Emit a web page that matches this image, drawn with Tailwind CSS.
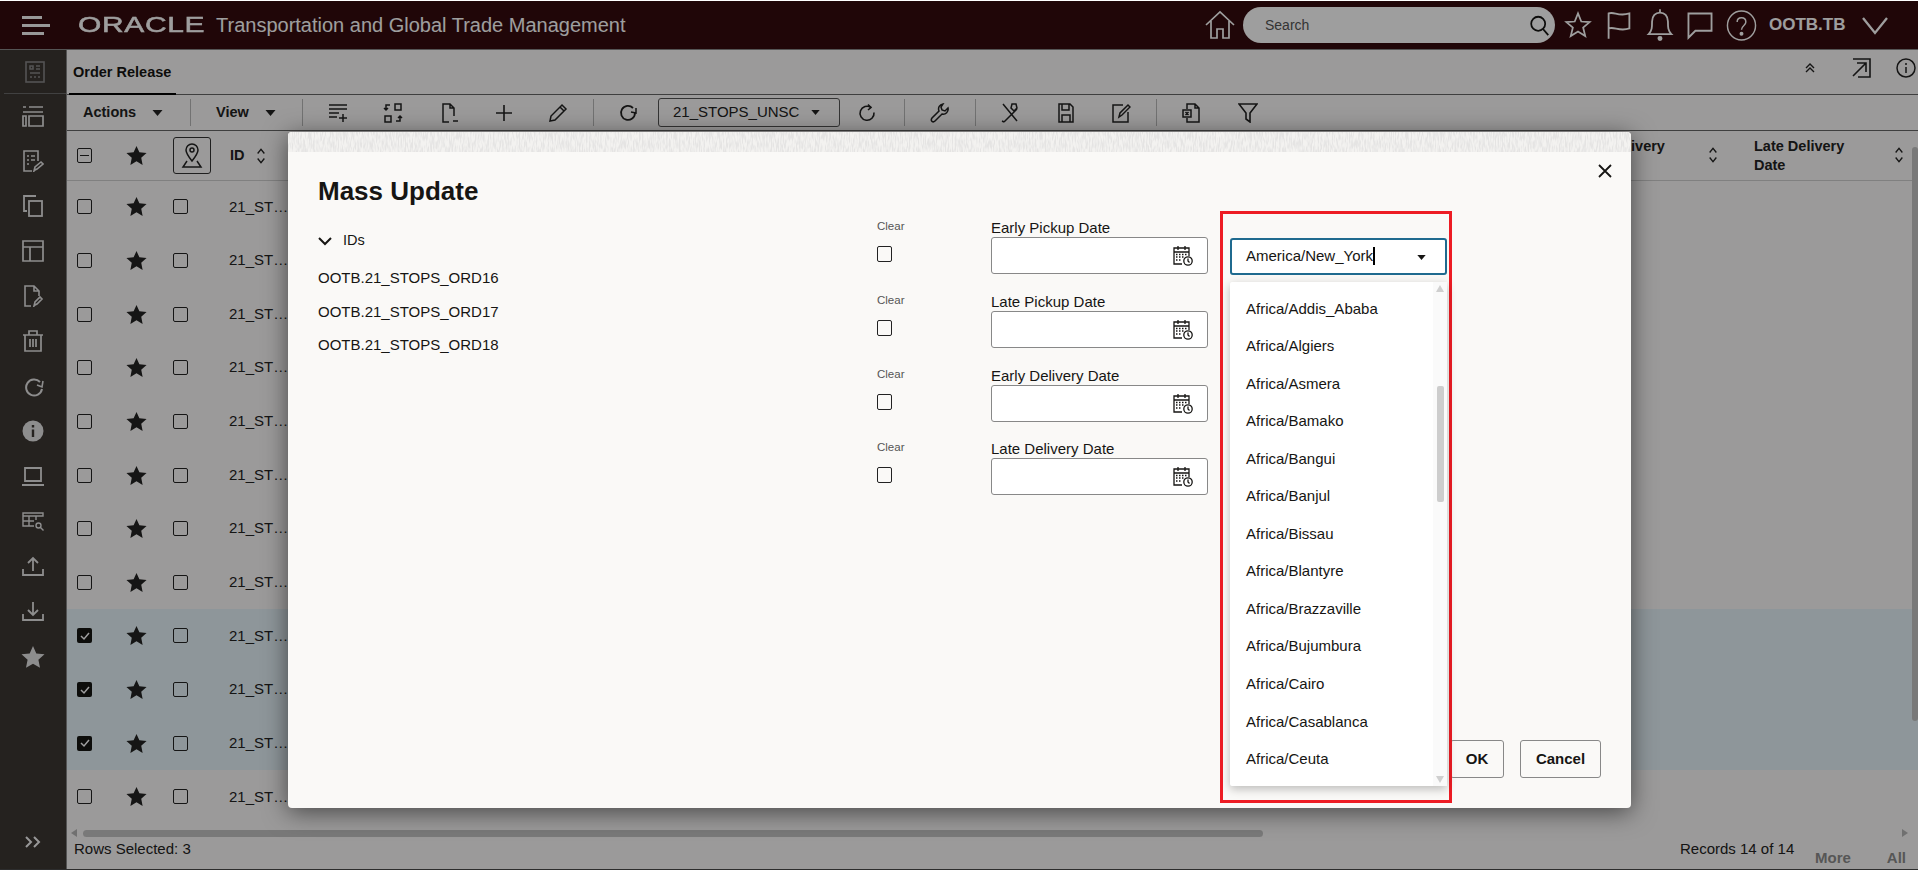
<!DOCTYPE html>
<html><head><meta charset="utf-8"><script src="https://cdn.jsdelivr.net/npm/@tailwindcss/browser@4"></script></head>
<body class="font-['Liberation_Sans',Arial,sans-serif] bg-white text-[#161513]">
<svg width="0" height="0" class="absolute">
<defs>
<symbol id="star" viewBox="0 0 24 24"><polygon fill="currentColor" points="12,1 15.300,8.400 23.500,9.200 17.400,14.700 19,22.800 12,18.700 5,22.800 6.600,14.700 0.500,9.200 8.700,8.400"/></symbol>
<symbol id="sort" viewBox="0 0 12 24" fill="none" stroke="currentColor" stroke-width="1.6"><path d="M2 9l4-5 4 5M2 15l4 5 4-5"/></symbol>
<symbol id="cal" viewBox="3 2 20 21" fill="none" stroke="currentColor" stroke-width="1.3"><path d="M12 21H4V5h15v8M8 3v4M15 3v4M4 9h15"/><path d="M6 11.500h1.500M9 11.500h1.500M12 11.500h1.500M15 11.500h1.500M6 14h1.500M9 14h1.500M12 14h1.500M6 17h1.500M9 17h1.500" stroke-width="1.500"/><circle cx="18" cy="18" r="4.200"/><path d="M18 15.500V18l1.500 1.500"/></symbol>
<symbol id="caret" viewBox="0 0 10 6"><path fill="currentColor" d="M0 0h10L5 6z"/></symbol>
</defs>
</svg>
<div class="relative w-[1918px] h-[871px] overflow-hidden pt-px">
<!-- app shell -->
<header class="h-[48px] bg-[#340a0d] text-white flex items-center">
  <div class="ml-[22px] w-[28px] flex flex-col gap-[5px]"><span class="block h-[3px] w-[20px] bg-[#f5f5f5]"></span><span class="block h-[3px] w-[28px] bg-[#f5f5f5]"></span><span class="block h-[3px] w-[22px] bg-[#f5f5f5]"></span></div>
  <div class="ml-[28px] w-[125px] relative text-[22px] leading-none tracking-[0.5px] origin-left scale-x-[1.36] whitespace-nowrap [-webkit-text-stroke:0.5px_currentColor]">ORACLE</div>
  <div class="ml-[13px] text-[20px] whitespace-nowrap">Transportation and Global Trade Management</div>
  <div class="ml-auto flex items-center">
    <svg class="w-[32px] h-[32px] mr-[7px]" viewBox="0 0 32 32" fill="none" stroke="currentColor" stroke-width="1.7"><path d="M2 16L16 3l14 13M7 12v17h6v-9h6v9h6V12"/></svg>
    <div class="w-[312px] h-[36px] rounded-full bg-white flex items-center pl-[22px] pr-[5px] justify-between text-[#555] text-[14px]"><span>Search</span><svg class="w-[21px] h-[21px] text-[#161513]" viewBox="0 0 24 24" fill="none" stroke="currentColor" stroke-width="2"><circle cx="10.500" cy="10" r="8"/><path d="M16 16l6 7"/></svg></div>
    <svg class="ml-[9px] w-[28px] h-[28px]" viewBox="0 0 24 24" fill="none" stroke="currentColor" stroke-width="1.5"><polygon points="12,2 14.800,9 22,9.500 16.400,14.200 18.200,21.500 12,17.500 5.800,21.500 7.600,14.200 2,9.500 9.200,9"/></svg>
    <svg class="ml-[13px] w-[28px] h-[30px]" viewBox="0 0 24 26" fill="none" stroke="currentColor" stroke-width="1.6"><path d="M3 25V3c5-2 8 3 18 0v13c-9 3-13-2-18 0"/></svg>
    <svg class="ml-[13px] w-[28px] h-[34px]" viewBox="0 0 24 30" fill="none" stroke="currentColor" stroke-width="1.6"><path d="M2 23c3-3 3-6 3-11 0-5 3-8 7-8s7 3 7 8c0 5 0 8 3 11z"/><path d="M12 1v3"/><circle cx="12" cy="27" r="1.400" fill="currentColor"/></svg>
    <svg class="ml-[12px] w-[28px] h-[30px]" viewBox="0 0 24 26" fill="none" stroke="currentColor" stroke-width="1.6"><path d="M2 3h20v15H8l-6 6z"/></svg>
    <svg class="ml-[12px] w-[31px] h-[31px]" viewBox="0 0 32 32" fill="none" stroke="currentColor" stroke-width="1.5"><ellipse cx="16" cy="16" rx="14.500" ry="15"/><path d="M11.500 12.500c0-6 9-6 9 0 0 3.500-4.500 3.500-4.500 8"/><circle cx="16" cy="24.500" r="1.300" fill="currentColor"/></svg>
    <span class="ml-[12px] text-[17px] font-bold w-[84px]">OOTB.TB</span>
    <svg class="ml-[9px] mr-[30px] w-[26px] h-[20px]" viewBox="0 0 26 20" fill="none" stroke="currentColor" stroke-width="2.300"><path d="M1 3l12 15L25 3"/></svg>
  </div>
</header>
<div class="flex h-[821px] border-b border-[#4a4a4a]">
  <aside class="w-[66px] shrink-0 bg-[#3d3733] text-[#e4e4e4] flex flex-col items-center border-t border-[#888]">
    <div class="w-[62px] ml-[4px] h-[44px] flex items-center justify-center border-b border-[#6a6a6a] text-[#888]"><svg class="w-[20px] h-[22px]" viewBox="0 0 20 22" fill="none" stroke="currentColor" stroke-width="1.6"><rect x="1" y="1" width="18" height="20"/><path d="M5 5h3v3H5zM11 5h4M11 8h4M5 12h10M5 16h2M9 16h2M13 16h2"/></svg></div>
    <div class="flex flex-col items-center gap-[23px] pt-[11px]">
      <svg class="w-[22px] h-[22px]" viewBox="0 0 22 22" fill="none" stroke="currentColor" stroke-width="1.7"><path d="M1 2h3M7 2h14M1 7h20M1 11h3v10H1zM7 11h14v10H7z"/></svg>
      <svg class="w-[22px] h-[22px]" viewBox="0 0 22 22" fill="none" stroke="currentColor" stroke-width="1.6"><path d="M10 21H2V1h14v10M5 6h2M9 6h4M5 10h2M9 10h4M5 14h2M13 20l-1 1 1-4 6-5 2 2-6 5z"/></svg>
      <svg class="w-[22px] h-[22px]" viewBox="0 0 22 22" fill="none" stroke="currentColor" stroke-width="1.8"><path d="M14 1H2v15h3"/><rect x="7" y="6" width="13" height="15"/></svg>
      <svg class="w-[22px] h-[22px]" viewBox="0 0 22 22" fill="none" stroke="currentColor" stroke-width="1.7"><path d="M1 1h20v20H1zM1 7h20M8 7v14"/></svg>
      <svg class="w-[22px] h-[22px]" viewBox="0 0 22 22" fill="none" stroke="currentColor" stroke-width="1.6"><path d="M9 21H3V1h9l5 5v5M12 1v5h5M13 20l-1 1 1-4 5-5 2 2-5 5z"/></svg>
      <svg class="w-[22px] h-[22px]" viewBox="0 0 22 22" fill="none" stroke="currentColor" stroke-width="1.7"><path d="M1 5h20M7 5V1h8v4M3 5v16h16V5M8 9v8M11 9v8M14 9v8"/></svg>
      <svg class="w-[22px] h-[22px]" viewBox="0 0 22 22" fill="none" stroke="currentColor" stroke-width="2"><path d="M18 7a8 8 0 1 0 2 7"/><path d="M15 10l5 2 1-6" stroke-width="1.6"/></svg>
      <svg class="w-[22px] h-[22px]" viewBox="0 0 22 22"><circle cx="11" cy="11" r="10.500" fill="currentColor"/><path fill="#3d3733" d="M9.800 9.500h2.400V17H9.800zM9.800 5h2.400v2.400H9.800z"/></svg>
      <svg class="w-[22px] h-[22px]" viewBox="0 0 22 22" fill="none" stroke="currentColor" stroke-width="1.8"><path d="M3 3h16v13H3zM0 20h22"/></svg>
      <svg class="w-[22px] h-[22px]" viewBox="0 0 22 22" fill="none" stroke="currentColor" stroke-width="1.4"><path d="M1 3h20v3H1zM1 6v10h11M1 11h11M7 6v10M14 6v4"/><circle cx="16.500" cy="15.500" r="2.500"/><path d="M18.500 17.500l3 3"/></svg>
      <svg class="w-[22px] h-[22px]" viewBox="0 0 22 22" fill="none" stroke="currentColor" stroke-width="1.8"><path d="M1 14v6h20v-6M11 16V3M6 8l5-5 5 5"/></svg>
      <svg class="w-[22px] h-[22px]" viewBox="0 0 22 22" fill="none" stroke="currentColor" stroke-width="1.8"><path d="M1 14v6h20v-6M11 2v13M6 10l5 5 5-5"/></svg>
      <svg class="w-[24px] h-[24px]"><use href="#star"/></svg>
    </div>
    <div class="mt-auto mb-[21px] text-[#f5f5f5]"><svg class="w-[18px] h-[12px] block" viewBox="0 0 18 12" fill="none" stroke="currentColor" stroke-width="2"><path d="M2 1l5 5-5 5M10 1l5 5-5 5"/></svg></div>
  </aside>
  <main class="flex-1 min-w-0 bg-[#fbf9f8] flex flex-col relative border-l border-[#888] border-t">
    <!-- tabs -->
    <div class="h-[45px] border-b border-[#666] flex items-stretch shrink-0">
      <div class="ml-[2px] px-[4px] w-[107px] flex items-center border-b-[2px] border-black -mb-px font-bold text-[14.500px] whitespace-nowrap pt-[2px]">Order Release</div>
      <div class="ml-auto flex items-center pb-[9px] text-[#222]">
        <svg class="w-[10px] h-[10px] mr-[37px]" viewBox="0 0 10 10" fill="none" stroke="currentColor" stroke-width="1.400"><path d="M1 5l4-4 4 4M1 9l4-4 4 4"/></svg>
        <svg class="w-[20px] h-[20px] mr-[24px]" viewBox="0 0 20 20" fill="none" stroke="currentColor" stroke-width="1.600"><path d="M1 1h17v18H6M5 5h9v9M14 5L1 18"/></svg>
        <svg class="w-[20px] h-[20px] -mr-[7px]" viewBox="0 0 20 20" fill="none" stroke="currentColor" stroke-width="1.500"><circle cx="10" cy="10" r="9"/><path d="M10 9v6M10 5v2"/></svg>
        <span class="w-[9px]"></span>
      </div>
    </div>
    <!-- toolbar -->
    <div class="h-[36px] border-b border-[#666] flex items-center shrink-0 text-[#222] text-[14.500px]">
      <span class="ml-[16px] w-[55px] font-bold">Actions</span>
      <svg class="ml-[14px] w-[11px] h-[6px]"><use href="#caret"/></svg>
      <span class="ml-[27px] w-px h-[27px] bg-[#b8b8b8]"></span>
      <span class="ml-[25px] w-[34px] font-bold">View</span>
      <svg class="ml-[15px] w-[11px] h-[6px]"><use href="#caret"/></svg>
      <span class="ml-[26px] w-px h-[27px] bg-[#b8b8b8]"></span>
      <svg class="ml-[25px] w-[20px] h-[20px]" viewBox="0 0 20 20" fill="none" stroke="currentColor" stroke-width="1.500"><path d="M1 2h18M1 6h18M1 10h10M1 14h8M15 11v8M11 15h8"/></svg>
      <svg class="ml-[35px] w-[20px] h-[20px]" viewBox="0 0 20 20" fill="none" stroke="currentColor" stroke-width="1.500"><path d="M12 1h6v6h-6zM2 13h6v6H2zM7 2H3v4M1 5l2 2 2-2M13 18h4v-5M15 15l2-2 2 2" /></svg>
      <svg class="ml-[36px] w-[20px] h-[20px]" viewBox="0 0 20 20" fill="none" stroke="currentColor" stroke-width="1.500"><path d="M10 19H4V1h7l4 4v8M11 1v4h4M14 18h5"/></svg>
      <svg class="ml-[35px] w-[20px] h-[20px]" viewBox="0 0 20 20" fill="none" stroke="currentColor" stroke-width="1.600"><path d="M10 2v16M2 10h16"/></svg>
      <svg class="ml-[34px] w-[20px] h-[20px]" viewBox="0 0 20 20" fill="none" stroke="currentColor" stroke-width="1.500"><path d="M2 18l1-5L14 2l4 4L7 17zM12 4l4 4"/></svg>
      <span class="ml-[25px] w-px h-[27px] bg-[#b8b8b8]"></span>
      <svg class="ml-[24px] w-[20px] h-[20px]" viewBox="0 0 20 20" fill="none" stroke="currentColor" stroke-width="1.800"><path d="M15 5a7 7 0 1 0 2 5"/><path d="M13 9l5 1 0-5" stroke-width="1.500"/></svg>
      <div class="ml-[20px] w-[182px] h-[29px] border border-[#555] rounded-[3px] flex items-center pl-[14px] whitespace-nowrap text-[15px]"><span class="w-[127px] overflow-hidden">21_STOPS_UNSC</span><svg class="ml-[11px] w-[9px] h-[5px]"><use href="#caret"/></svg></div>
      <svg class="ml-[18px] w-[20px] h-[20px]" viewBox="0 0 20 20" fill="none" stroke="currentColor" stroke-width="1.600"><path d="M13 4.500a7 7 0 1 0 3 5"/><path d="M10 1.500l3 3-3 2.500"/></svg>
      <span class="ml-[26px] w-px h-[27px] bg-[#b8b8b8]"></span>
      <svg class="ml-[25px] w-[20px] h-[20px]" viewBox="0 0 20 20" fill="none" stroke="currentColor" stroke-width="1.500"><path d="M13 1a5 5 0 0 0-4 7L2 15c-2 3 1 5 3 3l7-7a5 5 0 0 0 6-6l-3 3-3-1-1-3z"/></svg>
      <span class="ml-[25px] w-px h-[27px] bg-[#b8b8b8]"></span>
      <svg class="ml-[24px] w-[20px] h-[20px]" viewBox="0 0 20 20" fill="none" stroke="currentColor" stroke-width="1.500"><path d="M3 1l14 17M17 6l-13 13M2 18l2 1M12 1h4l1 4-3 3-3-3z"/></svg>
      <svg class="ml-[36px] w-[20px] h-[20px]" viewBox="0 0 20 20" fill="none" stroke="currentColor" stroke-width="1.500"><path d="M3 1h11l3 3v15H3zM6 1v6h7V1M6 19v-7h8v7"/></svg>
      <svg class="ml-[35px] w-[20px] h-[20px]" viewBox="0 0 20 20" fill="none" stroke="currentColor" stroke-width="1.500"><path d="M17 9v10H2V2h10M8 14l1-4 8-8 2 2-8 8z"/></svg>
      <span class="ml-[25px] w-px h-[27px] bg-[#b8b8b8]"></span>
      <svg class="ml-[25px] w-[20px] h-[20px]" viewBox="0 0 20 20" fill="none" stroke="currentColor" stroke-width="1.500"><path d="M5 6V1h8l4 4v14H5v-4M13 1v4h4M1 7h8v7H1zM3.500 9l3 3M6.500 9l-3 3"/></svg>
      <svg class="ml-[36px] w-[20px] h-[20px]" viewBox="0 0 20 20" fill="none" stroke="currentColor" stroke-width="1.600"><path d="M1 1h18l-7 9v9l-4-3v-6z"/></svg>
    </div>
    <!-- table header -->
    <div class="h-[50px] border-b border-[#cfcfcf] flex items-center pl-[10px] shrink-0 text-[14.500px] font-bold text-[#222] relative">
      <span class="w-[15px] h-[15px] border-[1.500px] border-[#222] rounded-[2px] flex items-center justify-center"><span class="w-[9px] h-[1.500px] bg-[#222]"></span></span>
      <svg class="ml-[34px] w-[21px] h-[21px]"><use href="#star"/></svg>
      <span class="ml-[26px] w-[38px] h-[37px] border border-[#333] rounded-[3px] flex items-center justify-center"><svg class="w-[22px] h-[26px]" viewBox="0 0 22 26" fill="none" stroke="currentColor" stroke-width="1.500"><path d="M11 18C7 13 5 10 5 7a6 6 0 0 1 12 0c0 3-2 6-6 11z"/><circle cx="11" cy="7" r="2"/><path d="M6 18l-4 6h18l-4-6"/></svg></span>
      <span class="ml-[19px]">ID</span>
      <svg class="ml-[11px] w-[10px] h-[20px]"><use href="#sort"/></svg>
      <div class="absolute left-[1502px] top-[6px] w-[102px] leading-[19px]">Early Delivery Date</div>
      <svg class="absolute left-[1641px] top-[14px] w-[10px] h-[20px]"><use href="#sort"/></svg>
      <div class="absolute left-[1687px] top-[6px] w-[110px] leading-[19px]">Late Delivery Date</div>
      <svg class="absolute left-[1827px] top-[14px] w-[10px] h-[20px]"><use href="#sort"/></svg>
    </div>
    <!-- rows -->
    <div class="-mt-px text-[15px] shrink-0 text-[#222] relative h-[645px]">
      <div class="h-[53.650px] flex items-center pl-[10px]"><span class="w-[15px] h-[15px] border-[1.500px] border-[#222] rounded-[2px]"></span><svg class="ml-[34px] w-[21px] h-[21px]"><use href="#star"/></svg><span class="ml-[26px] w-[15px] h-[15px] border-[1.500px] border-[#222] rounded-[2px]"></span><span class="ml-[41px]">21_ST…</span></div>
      <div class="h-[53.650px] flex items-center pl-[10px]"><span class="w-[15px] h-[15px] border-[1.500px] border-[#222] rounded-[2px]"></span><svg class="ml-[34px] w-[21px] h-[21px]"><use href="#star"/></svg><span class="ml-[26px] w-[15px] h-[15px] border-[1.500px] border-[#222] rounded-[2px]"></span><span class="ml-[41px]">21_ST…</span></div>
      <div class="h-[53.650px] flex items-center pl-[10px]"><span class="w-[15px] h-[15px] border-[1.500px] border-[#222] rounded-[2px]"></span><svg class="ml-[34px] w-[21px] h-[21px]"><use href="#star"/></svg><span class="ml-[26px] w-[15px] h-[15px] border-[1.500px] border-[#222] rounded-[2px]"></span><span class="ml-[41px]">21_ST…</span></div>
      <div class="h-[53.650px] flex items-center pl-[10px]"><span class="w-[15px] h-[15px] border-[1.500px] border-[#222] rounded-[2px]"></span><svg class="ml-[34px] w-[21px] h-[21px]"><use href="#star"/></svg><span class="ml-[26px] w-[15px] h-[15px] border-[1.500px] border-[#222] rounded-[2px]"></span><span class="ml-[41px]">21_ST…</span></div>
      <div class="h-[53.650px] flex items-center pl-[10px]"><span class="w-[15px] h-[15px] border-[1.500px] border-[#222] rounded-[2px]"></span><svg class="ml-[34px] w-[21px] h-[21px]"><use href="#star"/></svg><span class="ml-[26px] w-[15px] h-[15px] border-[1.500px] border-[#222] rounded-[2px]"></span><span class="ml-[41px]">21_ST…</span></div>
      <div class="h-[53.650px] flex items-center pl-[10px]"><span class="w-[15px] h-[15px] border-[1.500px] border-[#222] rounded-[2px]"></span><svg class="ml-[34px] w-[21px] h-[21px]"><use href="#star"/></svg><span class="ml-[26px] w-[15px] h-[15px] border-[1.500px] border-[#222] rounded-[2px]"></span><span class="ml-[41px]">21_ST…</span></div>
      <div class="h-[53.650px] flex items-center pl-[10px]"><span class="w-[15px] h-[15px] border-[1.500px] border-[#222] rounded-[2px]"></span><svg class="ml-[34px] w-[21px] h-[21px]"><use href="#star"/></svg><span class="ml-[26px] w-[15px] h-[15px] border-[1.500px] border-[#222] rounded-[2px]"></span><span class="ml-[41px]">21_ST…</span></div>
      <div class="h-[53.650px] flex items-center pl-[10px]"><span class="w-[15px] h-[15px] border-[1.500px] border-[#222] rounded-[2px]"></span><svg class="ml-[34px] w-[21px] h-[21px]"><use href="#star"/></svg><span class="ml-[26px] w-[15px] h-[15px] border-[1.500px] border-[#222] rounded-[2px]"></span><span class="ml-[41px]">21_ST…</span></div>
      <div class="h-[53.650px] flex items-center pl-[10px] bg-[#e6f3f8]"><span class="w-[15px] h-[15px] bg-[#161513] rounded-[2px] flex items-center justify-center text-white"><svg class="w-[10px] h-[10px]" viewBox="0 0 10 10" fill="none" stroke="currentColor" stroke-width="1.500"><path d="M1 5l3 3 5-6"/></svg></span><svg class="ml-[34px] w-[21px] h-[21px]"><use href="#star"/></svg><span class="ml-[26px] w-[15px] h-[15px] border-[1.500px] border-[#222] rounded-[2px]"></span><span class="ml-[41px]">21_ST…</span></div>
      <div class="h-[53.650px] flex items-center pl-[10px] bg-[#e6f3f8]"><span class="w-[15px] h-[15px] bg-[#161513] rounded-[2px] flex items-center justify-center text-white"><svg class="w-[10px] h-[10px]" viewBox="0 0 10 10" fill="none" stroke="currentColor" stroke-width="1.500"><path d="M1 5l3 3 5-6"/></svg></span><svg class="ml-[34px] w-[21px] h-[21px]"><use href="#star"/></svg><span class="ml-[26px] w-[15px] h-[15px] border-[1.500px] border-[#222] rounded-[2px]"></span><span class="ml-[41px]">21_ST…</span></div>
      <div class="h-[53.650px] flex items-center pl-[10px] bg-[#e6f3f8]"><span class="w-[15px] h-[15px] bg-[#161513] rounded-[2px] flex items-center justify-center text-white"><svg class="w-[10px] h-[10px]" viewBox="0 0 10 10" fill="none" stroke="currentColor" stroke-width="1.500"><path d="M1 5l3 3 5-6"/></svg></span><svg class="ml-[34px] w-[21px] h-[21px]"><use href="#star"/></svg><span class="ml-[26px] w-[15px] h-[15px] border-[1.500px] border-[#222] rounded-[2px]"></span><span class="ml-[41px]">21_ST…</span></div>
      <div class="h-[53.650px] flex items-center pl-[10px]"><span class="w-[15px] h-[15px] border-[1.500px] border-[#222] rounded-[2px]"></span><svg class="ml-[34px] w-[21px] h-[21px]"><use href="#star"/></svg><span class="ml-[26px] w-[15px] h-[15px] border-[1.500px] border-[#222] rounded-[2px]"></span><span class="ml-[41px]">21_ST…</span></div>
    </div>
    <!-- horizontal scrollbar -->
    <div class="h-[16px] shrink-0 flex items-center pl-[4px] text-[#b5b5b5]">
      <svg class="w-[6px] h-[8px]" viewBox="0 0 6 8"><path fill="currentColor" d="M6 0v8L0 4z"/></svg>
      <span class="ml-[6px] w-[1180px] h-[7px] rounded-full bg-[#c4c4c4]"></span>
      <svg class="ml-auto mr-[10px] w-[6px] h-[8px]" viewBox="0 0 6 8"><path fill="currentColor" d="M0 0v8l6-4z"/></svg>
    </div>
    <!-- footer -->
    <div class="flex-1 flex items-start text-[15px] text-[#222] pl-[7px] -mt-[3px]">
      <span>Rows Selected: 3</span>
      <span class="ml-auto mr-[122px] w-[116px]">Records 14 of 14</span>
    </div>
    <div class="absolute right-[12px] bottom-0 flex gap-[36px] font-bold text-[15px] text-[#8c8c8c]"><span>More</span><span>All</span></div>
    <!-- vertical scrollbar -->
    <div class="absolute right-0 top-[81px] w-[6px] h-[640px] flex flex-col items-center">
      <span class="mt-[16px] w-[6px] flex-1 rounded-full bg-[#c4c4c4] mb-[50px]"></span>
    </div>
  </main>
</div>

<!-- modal scrim -->
<div class="absolute left-0 right-0 top-px bottom-px bg-black/38"></div>

<!-- dialog -->
<div class="absolute left-[288px] top-[132px] w-[1343px] h-[676px] bg-[#faf9f7] rounded-[4px] shadow-[0_4px_24px_rgba(0,0,0,0.55)] overflow-hidden text-[#161513]">
  <svg class="block w-full h-[20px]"><filter id="hatch"><feTurbulence type="fractalNoise" baseFrequency="0.7 0.12" numOctaves="2" seed="4"/><feColorMatrix values="0 0 0 0 0.78  0 0 0 0 0.775  0 0 0 0 0.77  2.500 2.500 0 0 -2.100"/></filter><rect width="100%" height="100%" fill="#f3f2f0"/><rect width="100%" height="100%" filter="url(#hatch)"/></svg>
  <div class="flex">
    <section class="w-[589px] pl-[30px]">
      <h1 class="mt-[24px] text-[26px] leading-[30px] font-bold">Mass Update</h1>
      <div class="mt-[25px] flex items-center h-[20px] text-[14.500px]"><svg class="w-[14px] h-[10px]" viewBox="0 0 14 10" fill="none" stroke="currentColor" stroke-width="2"><path d="M1 2l6 6 6-6"/></svg><span class="ml-[11px]">IDs</span></div>
      <div class="mt-[10px] text-[15px] leading-[33.500px]"><div>OOTB.21_STOPS_ORD16</div><div>OOTB.21_STOPS_ORD17</div><div>OOTB.21_STOPS_ORD18</div></div>
    </section>
    <section class="pt-[67px] flex flex-col gap-[4.800px]">
      <div class="flex h-[69px]"><div class="w-[114px]"><div class="text-[11.500px] leading-[15px] text-[#555]">Clear</div><div class="mt-[12px] w-[15px] h-[16px] border-[1.500px] border-[#222] rounded-[2px]"></div></div><div><div class="text-[15px] leading-[16px] mt-[1px]">Early Pickup Date</div><div class="mt-[1px] w-[217px] h-[37px] bg-white border border-[#888] rounded-[3px] flex items-center justify-end pr-[14px]"><svg class="w-[20px] h-[21px]"><use href="#cal"/></svg></div></div></div>
      <div class="flex h-[69px]"><div class="w-[114px]"><div class="text-[11.500px] leading-[15px] text-[#555]">Clear</div><div class="mt-[12px] w-[15px] h-[16px] border-[1.500px] border-[#222] rounded-[2px]"></div></div><div><div class="text-[15px] leading-[16px] mt-[1px]">Late Pickup Date</div><div class="mt-[1px] w-[217px] h-[37px] bg-white border border-[#888] rounded-[3px] flex items-center justify-end pr-[14px]"><svg class="w-[20px] h-[21px]"><use href="#cal"/></svg></div></div></div>
      <div class="flex h-[69px]"><div class="w-[114px]"><div class="text-[11.500px] leading-[15px] text-[#555]">Clear</div><div class="mt-[12px] w-[15px] h-[16px] border-[1.500px] border-[#222] rounded-[2px]"></div></div><div><div class="text-[15px] leading-[16px] mt-[1px]">Early Delivery Date</div><div class="mt-[1px] w-[217px] h-[37px] bg-white border border-[#888] rounded-[3px] flex items-center justify-end pr-[14px]"><svg class="w-[20px] h-[21px]"><use href="#cal"/></svg></div></div></div>
      <div class="flex h-[69px]"><div class="w-[114px]"><div class="text-[11.500px] leading-[15px] text-[#555]">Clear</div><div class="mt-[12px] w-[15px] h-[16px] border-[1.500px] border-[#222] rounded-[2px]"></div></div><div><div class="text-[15px] leading-[16px] mt-[1px]">Late Delivery Date</div><div class="mt-[1px] w-[217px] h-[37px] bg-white border border-[#888] rounded-[3px] flex items-center justify-end pr-[14px]"><svg class="w-[20px] h-[21px]"><use href="#cal"/></svg></div></div></div>
    </section>
  </div>
  <!-- close -->
  <svg class="absolute left-[1310px] top-[32px] w-[14px] h-[14px]" viewBox="0 0 14 14" fill="none" stroke="currentColor" stroke-width="1.800"><path d="M1 1l12 12M13 1L1 13"/></svg>
  <!-- footer buttons -->
  <div class="absolute right-[30px] bottom-[30px] flex gap-[16px] text-[15px] font-bold">
    <button class="w-[54px] h-[38px] border border-[#888] rounded-[3px]">OK</button>
    <button class="w-[81px] h-[38px] border border-[#888] rounded-[3px]">Cancel</button>
  </div>
</div>

<!-- time-zone combobox with open list, ringed by the red annotation -->
<div class="absolute left-[1220px] top-[211px] w-[232px] h-[592px] border-[3px] border-[#ed1c24] pt-[24px] pl-[7px] text-[15px] text-[#161513]">
  <div class="w-[217px] h-[37px] bg-white border-2 border-[#1f6a8f] rounded-[3px] flex items-center pl-[14px] pb-[1px] relative"><span class="border-r-2 border-black leading-[18px] pr-0">America/New_York</span><svg class="absolute left-[185px] top-[15px] w-[9px] h-[5px]"><use href="#caret"/></svg></div>
  <div class="mt-[7px] w-[217px] h-[504px] bg-white rounded-[2px] shadow-[0_3px_10px_rgba(0,0,0,0.25)] relative flex">
    <div class="w-[203px] pl-[16px] pt-[8px]">
      <div class="h-[37.560px] flex items-center">Africa/Addis_Ababa</div>
      <div class="h-[37.560px] flex items-center">Africa/Algiers</div>
      <div class="h-[37.560px] flex items-center">Africa/Asmera</div>
      <div class="h-[37.560px] flex items-center">Africa/Bamako</div>
      <div class="h-[37.560px] flex items-center">Africa/Bangui</div>
      <div class="h-[37.560px] flex items-center">Africa/Banjul</div>
      <div class="h-[37.560px] flex items-center">Africa/Bissau</div>
      <div class="h-[37.560px] flex items-center">Africa/Blantyre</div>
      <div class="h-[37.560px] flex items-center">Africa/Brazzaville</div>
      <div class="h-[37.560px] flex items-center">Africa/Bujumbura</div>
      <div class="h-[37.560px] flex items-center">Africa/Cairo</div>
      <div class="h-[37.560px] flex items-center">Africa/Casablanca</div>
      <div class="h-[37.560px] flex items-center">Africa/Ceuta</div>
    </div>
    <div class="w-[14px] bg-[#fafafa] flex flex-col items-center pt-[3px] pb-[3px] text-[#cfcfcf] relative">
      <svg class="w-[8px] h-[7px]" viewBox="0 0 8 7"><path fill="currentColor" d="M4 0l4 7H0z"/></svg>
      <span class="mt-[94px] w-[7px] h-[116px] rounded-[2px] bg-[#cdcdcd]"></span>
      <svg class="mt-auto w-[8px] h-[7px]" viewBox="0 0 8 7"><path fill="currentColor" d="M0 0h8L4 7z"/></svg>
    </div>
  </div>
</div>
</div>
</body></html>
